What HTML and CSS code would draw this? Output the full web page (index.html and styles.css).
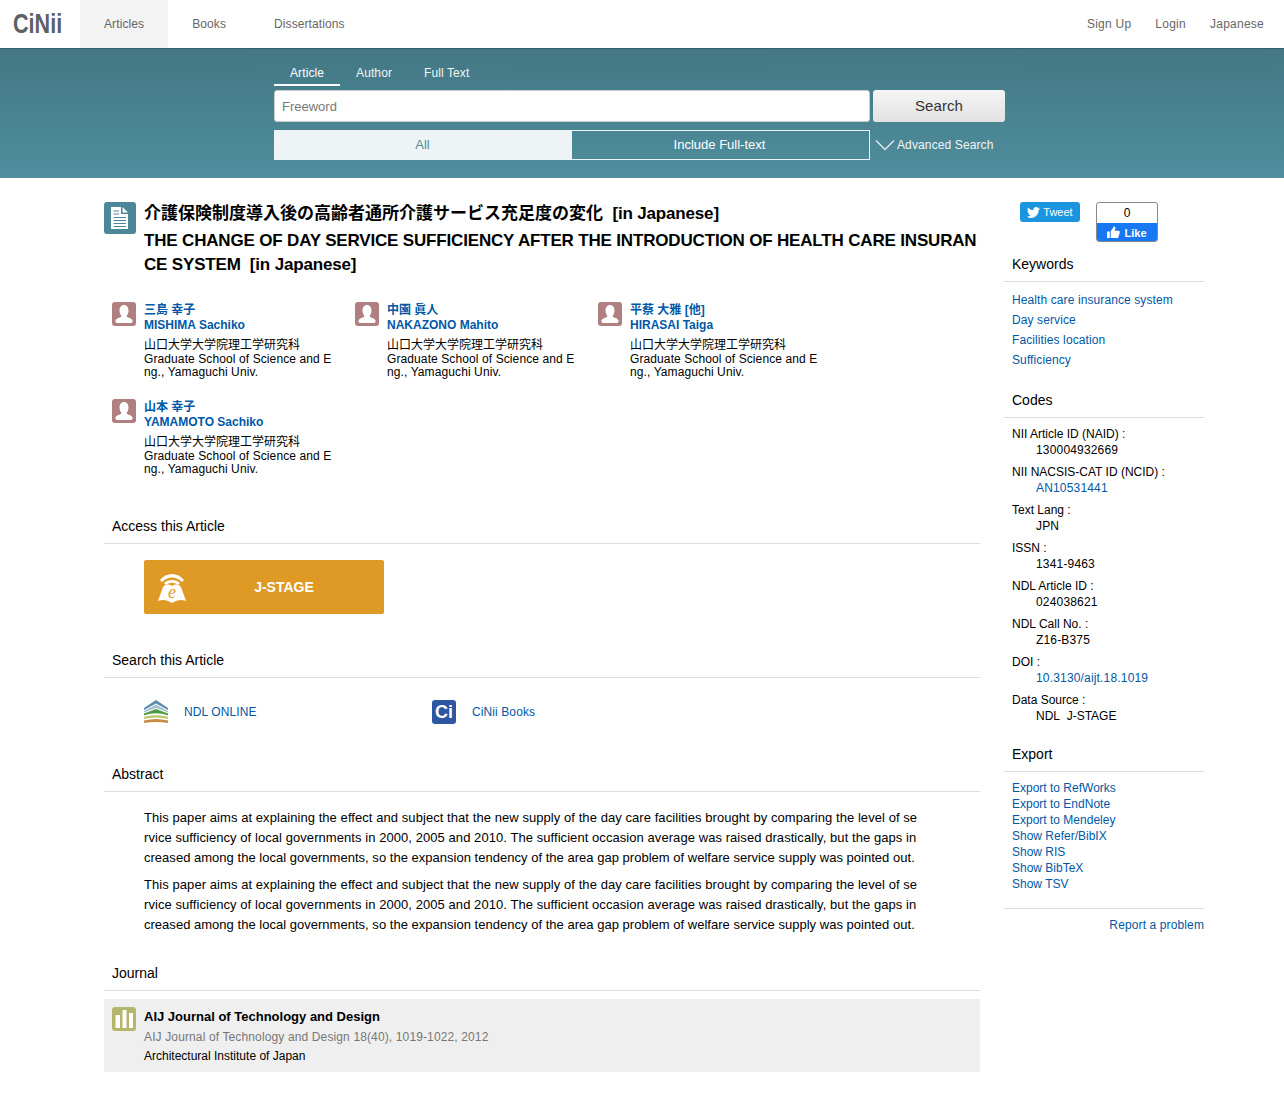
FILE: index.html
```html
<!DOCTYPE html>
<html lang="en">
<head>
    <meta charset="UTF-8">
    <title>CiNii Articles</title>
    <link rel="stylesheet" href="styles.css">
</head>
<body>
    <header class="topbar">
        <a class="logo"><span class="logo-text">CiNii</span></a>
        <nav class="topnav">
            <a class="topnav-item active">Articles</a>
            <a class="topnav-item">Books</a>
            <a class="topnav-item">Dissertations</a>
        </nav>
        <nav class="usernav">
            <a>Sign Up</a>
            <a>Login</a>
            <a>Japanese</a>
        </nav>
    </header>

    <section class="searchband">
        <div class="searchbox">
            <div class="tabs">
                <a class="tab active">Article</a>
                <a class="tab">Author</a>
                <a class="tab">Full Text</a>
            </div>
            <div class="search-row">
                <input class="search-input" type="text" placeholder="Freeword">
                <button class="search-btn">Search</button>
            </div>
            <div class="filter-row">
                <div class="filter">
                    <a class="filter-item active">All</a>
                    <a class="filter-item">Include Full-text</a>
                </div>
                <a class="advanced">
                    <svg width="20" height="12" viewBox="0 0 20 12"><path d="M1 1.5 L10 10.5 L19 1.5" fill="none" stroke="#dfeaed" stroke-width="1.5"/></svg>
                    Advanced Search
                </a>
            </div>
        </div>
    </section>

    <div class="page">
        <main class="content">
            <div class="title-block">
                <div class="doc-icon">
                    <svg width="32" height="32" viewBox="0 0 32 32"><path d="M7 5 H17 V12 H24 V27 H7 Z" fill="#fff"/><path d="M18.500 5 L24 10.500 H18.500 Z" fill="#fff"/><path d="M9.500 9 H15 M9.500 12 H15 M9.500 15.500 H22 M9.500 18.500 H22 M9.500 21.500 H22 M9.500 24.500 H22" stroke="#4b8798" stroke-width="1.2"/></svg>
                </div>
                <h1 class="title">
                    <span class="title-line">介護保険制度導入後の高齢者通所介護サービス充足度の変化&nbsp; <span class="title-en">[in Japanese]</span></span>
                    <span class="title-line title-en">THE CHANGE OF DAY SERVICE SUFFICIENCY AFTER THE INTRODUCTION OF HEALTH CARE INSURANCE SYSTEM&nbsp; [in Japanese]</span>
                </h1>
            </div>

            <div class="authors">
                <div class="author">
                    <div class="avatar"><svg width="24" height="24" viewBox="0 0 24 24"><use href="#person"/></svg></div>
                    <div class="author-text">
                        <a class="author-name"><span>三島 幸子</span><span>MISHIMA Sachiko</span></a>
                        <p class="aff-ja">山口大学大学院理工学研究科</p>
                        <p class="aff">Graduate School of Science and Eng., Yamaguchi Univ.</p>
                    </div>
                </div>
                <div class="author">
                    <div class="avatar"><svg width="24" height="24" viewBox="0 0 24 24"><use href="#person"/></svg></div>
                    <div class="author-text">
                        <a class="author-name"><span>中園 眞人</span><span>NAKAZONO Mahito</span></a>
                        <p class="aff-ja">山口大学大学院理工学研究科</p>
                        <p class="aff">Graduate School of Science and Eng., Yamaguchi Univ.</p>
                    </div>
                </div>
                <div class="author">
                    <div class="avatar"><svg width="24" height="24" viewBox="0 0 24 24"><use href="#person"/></svg></div>
                    <div class="author-text">
                        <a class="author-name"><span>平蔡 大雅 [他]</span><span>HIRASAI Taiga</span></a>
                        <p class="aff-ja">山口大学大学院理工学研究科</p>
                        <p class="aff">Graduate School of Science and Eng., Yamaguchi Univ.</p>
                    </div>
                </div>
                <div class="author">
                    <div class="avatar"><svg width="24" height="24" viewBox="0 0 24 24"><use href="#person"/></svg></div>
                    <div class="author-text">
                        <a class="author-name"><span>山本 幸子</span><span>YAMAMOTO Sachiko</span></a>
                        <p class="aff-ja">山口大学大学院理工学研究科</p>
                        <p class="aff">Graduate School of Science and Eng., Yamaguchi Univ.</p>
                    </div>
                </div>
            </div>

            <h2 class="section-head access-head">Access this Article</h2>
            <a class="jstage">
                <svg class="jstage-icon" width="32" height="32" viewBox="0 0 32 32">
                    <path d="M4 9 C10 1 22 1 28 9 L26 11 C20 5 12 5 6 11 Z" fill="#fff"/>
                    <path d="M8 12 C12 8 20 8 24 12 L22 14 C18 11 14 11 10 14 Z" fill="#fff"/>
                    <path d="M7 16 C10 13 13 13 16 15 C19 13 22 13 25 16 L30 30 C25 28 21 29 16 32 C11 29 7 28 2 30 Z" fill="#fff"/>
                    <text x="16" y="27" class="jstage-e">e</text>
                </svg>
                <span class="jstage-label">J-STAGE</span>
            </a>

            <h2 class="section-head search-head">Search this Article</h2>
            <div class="ext-links">
                <a class="ext-link">
                    <svg width="24" height="24" viewBox="0 0 24 24">
                        <path d="M12 0 L24 8 V10 L12 3.500 L0 10 V8 Z" fill="#5b8ca8"/>
                        <path d="M12 4.500 L24 11 V12.500 L12 8 L0 12.500 V11 Z" fill="#a9c2cf"/>
                        <path d="M12 9 L24 13.500 V15.500 C16 12.500 8 12.500 0 15.500 V13.500 Z" fill="#4f9a45"/>
                        <path d="M0 17 C8 14.500 16 14.500 24 17 V19 C16 17 8 17 0 19 Z" fill="#b9c96e"/>
                        <path d="M0 20.500 C8 18.500 16 18.500 24 20.500 V23 C16 21.500 8 21.500 0 23 Z" fill="#c98a45"/>
                    </svg>
                    NDL ONLINE
                </a>
                <a class="ext-link">
                    <span class="ci-icon">Ci</span>
                    CiNii Books
                </a>
            </div>

            <h2 class="section-head abstract-head">Abstract</h2>
            <div class="abstract">
                <p>This paper aims at explaining the effect and subject that the new supply of the day care facilities brought by comparing the level of se<br>rvice sufficiency of local governments in 2000, 2005 and 2010. The sufficient occasion average was raised drastically, but the gaps in<br><span class="abstract-tail">creased among the local governments, so the expansion tendency of the area gap problem of welfare service supply was pointed out.</span></p>
                <p>This paper aims at explaining the effect and subject that the new supply of the day care facilities brought by comparing the level of se<br>rvice sufficiency of local governments in 2000, 2005 and 2010. The sufficient occasion average was raised drastically, but the gaps in<br><span class="abstract-tail">creased among the local governments, so the expansion tendency of the area gap problem of welfare service supply was pointed out.</span></p>
            </div>

            <h2 class="section-head journal-head">Journal</h2>
            <div class="journal">
                <div class="journal-icon">
                    <svg width="24" height="24" viewBox="0 0 24 24"><path d="M3.500 8 H8 V21 H3.500 Z M10.500 3 H14.500 V21 H10.500 Z M17 6 H21 V21 H17 Z" fill="#fff"/></svg>
                </div>
                <div>
                    <div class="journal-title">AIJ Journal of Technology and Design</div>
                    <div class="journal-vol">AIJ Journal of Technology and Design 18(40), 1019-1022, 2012</div>
                    <div class="journal-pub">Architectural Institute of Japan</div>
                </div>
            </div>
        </main>

        <aside class="sidebar">
            <div class="social">
                <a class="tweet">
                    <svg width="13" height="11" viewBox="0 0 24 20"><path d="M24 2.4c-.9.4-1.8.7-2.8.8 1-.6 1.800-1.600 2.200-2.700-1 .6-2 1-3.100 1.200C19.300.7 18 0 16.600 0c-2.700 0-4.900 2.200-4.900 4.900 0 .4 0 .8.100 1.100C7.700 5.800 4.100 3.900 1.700.9 1.200 1.600 1 2.500 1 3.400c0 1.700.9 3.200 2.200 4.100-.8 0-1.600-.2-2.200-.6v.1c0 2.400 1.700 4.400 3.900 4.800-.4.100-.8.200-1.300.2-.3 0-.6 0-.9-.1.600 2 2.400 3.400 4.600 3.400-1.700 1.300-3.800 2.100-6.100 2.100-.4 0-.8 0-1.200-.1C2.200 19.200 4.800 20 7.500 20c9.100 0 14-7.500 14-14v-.6c1-.7 1.800-1.600 2.500-3z" fill="#fff"/></svg>
                    Tweet
                </a>
                <div class="fb">
                    <div class="fb-count">0</div>
                    <div class="fb-like">
                        <svg width="13" height="13" viewBox="0 0 14 14"><path d="M0 6 H3 V13 H0 Z M4 6 L7 1 C8 0 9.500 1 9 2.500 L8.300 5 H12.500 C13.500 5 14 6 13.700 7 L12.300 12 C12 13 11.300 13 10.500 13 H4 Z" fill="#fff"/></svg>
                        Like
                    </div>
                </div>
            </div>

            <h3 class="side-head keywords-head">Keywords</h3>
            <ul class="keywords">
                <li><a>Health care insurance system</a></li>
                <li><a>Day service</a></li>
                <li><a>Facilities location</a></li>
                <li><a>Sufficiency</a></li>
            </ul>

            <h3 class="side-head">Codes</h3>
            <dl class="codes">
                <dt>NII Article ID (NAID) :</dt>
                <dd>130004932669</dd>
                <dt>NII NACSIS-CAT ID (NCID) :</dt>
                <dd><a>AN10531441</a></dd>
                <dt>Text Lang :</dt>
                <dd>JPN</dd>
                <dt>ISSN :</dt>
                <dd>1341-9463</dd>
                <dt>NDL Article ID :</dt>
                <dd>024038621</dd>
                <dt>NDL Call No. :</dt>
                <dd>Z16-B375</dd>
                <dt>DOI :</dt>
                <dd><a>10.3130/aijt.18.1019</a></dd>
                <dt>Data Source :</dt>
                <dd class="plain">NDL&nbsp; J-STAGE</dd>
            </dl>

            <h3 class="side-head">Export</h3>
            <ul class="export">
                <li><a>Export to RefWorks</a></li>
                <li><a>Export to EndNote</a></li>
                <li><a>Export to Mendeley</a></li>
                <li><a>Show Refer/BibIX</a></li>
                <li><a>Show RIS</a></li>
                <li><a>Show BibTeX</a></li>
                <li><a>Show TSV</a></li>
            </ul>
            <div class="report"><a>Report a problem</a></div>
        </aside>
    </div>

    <svg class="defs" width="0" height="0">
        <symbol id="person" viewBox="0 0 24 24">
            <path d="M12 3 C15 3 16.500 5.500 16.500 8.500 C16.500 11 15.500 13 14.500 14 C14.500 15.500 20 16 20.500 18.500 C20.800 20 20 21 19 21 H5 C4 21 3.200 20 3.500 18.500 C4 16 9.500 15.500 9.500 14 C8.500 13 7.500 11 7.500 8.500 C7.500 5.500 9 3 12 3 Z" fill="#fff"/>
        </symbol>
    </svg>
</body>
</html>
```

FILE: styles.css
```css
* {
    box-sizing: border-box;
}
body {
    margin: 0;
    font-family: "Liberation Sans", Arial, "Noto Sans CJK JP", sans-serif;
    font-size: 12px;
    color: #000;
    background-color: #fff;
}
a {
    color: #0058a6;
    text-decoration: none;
}
p, h1, h2, h3, ul, dl, dd {
    margin: 0;
    padding: 0;
}
ul {
    list-style: none;
}
.defs {
    position: absolute;
}

/* top bar */
.topbar {
    display: flex;
    height: 48px;
    background-color: #fff;
}
.logo {
    width: 80px;
    padding-left: 13px;
    font-size: 27px;
    font-weight: bold;
    line-height: 48px;
    color: #5d6064;
}
.logo-text {
    display: inline-block;
    transform: scaleX(0.8);
    transform-origin: left center;
}
.topnav {
    display: flex;
    flex: 1;
}
.topnav-item {
    padding: 0 24px;
    line-height: 48px;
    letter-spacing: 0.1px;
    color: #666;
}
.topnav-item.active {
    background-color: #f3f3f3;
}
.usernav {
    display: flex;
    gap: 24px;
    padding-right: 20px;
    line-height: 48px;
    letter-spacing: 0.25px;
}
.usernav a {
    color: #666;
}

/* search band */
.searchband {
    height: 130px;
    padding: 10px 0 0 274px;
    background: linear-gradient(#437783, #4f8e9d);
    box-shadow: inset 0 1px 0 rgba(0,0,0,0.2);
}
.searchbox {
    width: 731px;
}
.tabs {
    display: flex;
    height: 28px;
}
.tab {
    padding: 0 16px;
    line-height: 30px;
    letter-spacing: 0.1px;
    color: #f0f5f6;
}
.tab.active {
    border-bottom: 2px solid #fff;
    color: #fff;
}
.search-row {
    display: flex;
    gap: 3px;
    margin-top: 4px;
}
.search-input {
    width: 596px;
    height: 32px;
    padding: 0 7px;
    border: 1px solid #ccc;
    border-radius: 3px;
    font-family: inherit;
    font-size: 13px;
}
.search-input::placeholder {
    color: #777;
}
.search-btn {
    width: 132px;
    height: 32px;
    padding: 0 0 2px;
    border: none;
    border-radius: 3px;
    background: linear-gradient(#f5f5f5, #e2e2e2);
    font-family: inherit;
    font-size: 15px;
    letter-spacing: 0.1px;
    color: #333;
}
.filter-row {
    display: flex;
    align-items: center;
    margin-top: 8px;
}
.filter {
    display: flex;
    width: 596px;
    height: 30px;
    border: 1px solid #eef4f6;
}
.filter-item {
    flex: 1;
    padding-right: 2px;
    font-size: 13px;
    line-height: 28px;
    text-align: center;
    color: #fff;
}
.filter-item.active {
    background-color: #eef4f6;
    color: #4f8c9b;
}
.advanced {
    display: flex;
    align-items: center;
    gap: 2px;
    margin-left: 5px;
    letter-spacing: 0.12px;
    color: #f0f5f6;
}

/* page */
.page {
    display: flex;
    gap: 24px;
    width: 1100px;
    margin-left: 104px;
}
.content {
    width: 876px;
    padding-top: 24px;
}
.sidebar {
    width: 200px;
    padding-top: 24px;
}

/* title */
.title-block {
    display: flex;
    gap: 8px;
}
.doc-icon {
    flex: none;
    width: 32px;
    height: 32px;
    border-radius: 3px;
    background-color: #4b8798;
}
.title {
    font-size: 17px;
    line-height: 24px;
    font-weight: bold;
    word-break: break-all;
}
.title-line {
    display: block;
    margin-bottom: 3px;
}
.title-en {
    letter-spacing: -0.17px;
}

/* authors */
.authors {
    display: grid;
    grid-template-columns: repeat(3, 243px);
    grid-auto-rows: 76px;
    row-gap: 21px;
    margin: 22px 0 0 8px;
}
.author {
    display: flex;
    gap: 8px;
}
.avatar {
    flex: none;
    width: 24px;
    height: 24px;
    border-radius: 3px;
    background-color: #b07f7f;
}
.avatar svg {
    display: block;
}
.author-text {
    width: 190px;
    padding-top: 1px;
    word-break: break-all;
}
.author-name {
    display: block;
    margin-bottom: 5px;
    font-weight: bold;
}
.author-name span {
    display: block;
    height: 15px;
    line-height: 15px;
}
.aff-ja {
    height: 15px;
    line-height: 15px;
}
.aff {
    line-height: 13px;
    letter-spacing: 0.1px;
}

/* section headings */
.section-head {
    height: 28px;
    margin-top: 38px;
    padding-left: 8px;
    border-bottom: 1px solid #ddd;
    font-size: 14px;
    font-weight: normal;
    line-height: 20px;
}
.access-head {
    margin-top: 41px;
}
.search-head {
    margin-top: 36px;
}
.jstage {
    display: flex;
    align-items: center;
    width: 240px;
    height: 54px;
    margin: 16px 0 0 40px;
    padding-left: 12px;
    border-radius: 2px;
    background-color: #de9a25;
}
.jstage-e {
    font-family: "Liberation Serif", serif;
    font-size: 18px;
    font-style: italic;
    fill: #de9a25;
    text-anchor: middle;
}
.jstage-label {
    flex: 1;
    padding-right: 4px;
    font-size: 14px;
    font-weight: bold;
    text-align: center;
    color: #fff;
}
.ext-links {
    display: flex;
    margin: 20px 0 0 40px;
}
.ext-link {
    display: flex;
    align-items: center;
    gap: 16px;
    width: 288px;
    height: 28px;
    letter-spacing: 0.1px;
}
.ci-icon {
    width: 24px;
    height: 24px;
    border-radius: 3px;
    background-color: #2d55a0;
    font-size: 18px;
    font-weight: bold;
    line-height: 25px;
    letter-spacing: 0;
    text-align: center;
    color: #fff;
}
.abstract {
    margin: 16px 0 0 40px;
    font-size: 13px;
    line-height: 20px;
    letter-spacing: 0.065px;
    white-space: nowrap;
}
.abstract p {
    margin-bottom: 7px;
}
.abstract-tail {
    letter-spacing: 0.02px;
}
.journal-head {
    margin-top: 28px;
}
.journal {
    display: flex;
    gap: 8px;
    height: 73px;
    margin-top: 8px;
    padding: 8px;
    background-color: #efefef;
}
.journal-icon {
    flex: none;
    width: 24px;
    height: 24px;
    border-radius: 3px;
    background-color: #b5b56d;
}
.journal-title {
    margin-top: 1px;
    font-size: 13px;
    font-weight: bold;
    line-height: 18px;
}
.journal-vol {
    margin-top: 2px;
    line-height: 18px;
    letter-spacing: 0.13px;
    color: #777;
}
.journal-pub {
    line-height: 20px;
}

/* sidebar */
.social {
    display: flex;
    gap: 16px;
    height: 40px;
    padding-left: 16px;
}
.tweet {
    display: flex;
    align-items: center;
    justify-content: center;
    gap: 3px;
    width: 60px;
    height: 20px;
    border-radius: 3px;
    background-color: #1b95e0;
    font-size: 11px;
    color: #fff;
}
.fb {
    width: 62px;
    height: 40px;
    border: 1px solid #888;
    border-radius: 3px;
    overflow: hidden;
    text-align: center;
}
.fb-count {
    height: 20px;
    line-height: 20px;
}
.fb-like {
    display: flex;
    align-items: center;
    justify-content: center;
    gap: 4px;
    height: 19px;
    background-color: #1877f2;
    font-size: 11px;
    font-weight: bold;
    color: #fff;
}
.side-head {
    height: 28px;
    margin-top: 20px;
    padding-left: 8px;
    border-bottom: 1px solid #ddd;
    font-size: 14px;
    font-weight: normal;
    line-height: 20px;
}
.side-head.keywords-head {
    margin-top: 12px;
}
.keywords {
    padding: 8px 0 0 8px;
    letter-spacing: 0.1px;
}
.keywords li {
    height: 20px;
    line-height: 20px;
}
.codes {
    margin: 8px 0 0 8px;
}
.codes dt {
    line-height: 16px;
}
.codes dd {
    margin-bottom: 6px;
    padding-left: 24px;
    line-height: 16px;
    letter-spacing: 0.17px;
}
.codes dd.plain {
    letter-spacing: 0;
}
.export {
    padding: 8px 0 0 8px;
}
.export li {
    height: 16px;
    line-height: 16px;
}
.report {
    margin-top: 16px;
    padding-top: 9px;
    border-top: 1px solid #ddd;
    letter-spacing: 0.12px;
    text-align: right;
}
```
